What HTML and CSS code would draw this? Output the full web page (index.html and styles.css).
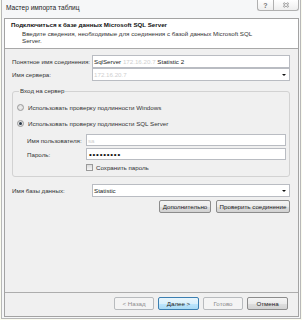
FILE: index.html
```html
<!DOCTYPE html>
<html lang="ru">
<head>
<meta charset="utf-8">
<title>Мастер импорта таблиц</title>
<link rel="stylesheet" href="styles.css">
</head>
<body>
<div class="window">
  <div class="titlebar">
    <span class="title">Мастер импорта таблиц</span>
    <div class="caption-btns">
      <span class="cbtn help">?</span>
      <span class="cbtn close">
        <svg width="8" height="6" viewBox="0 0 8 6"><path d="M1.5 1L6.5 5M6.5 1L1.5 5" stroke="#8a8a8a" stroke-width="2.2" fill="none"/><path d="M1.5 1L6.5 5M6.5 1L1.5 5" stroke="#ffffff" stroke-width="0.9" fill="none"/></svg>
      </span>
    </div>
  </div>
  <div class="client">
    <div class="header">
      <div class="h-title">Подключиться к базе данных Microsoft SQL Server</div>
      <div class="h-desc">Введите сведения, необходимые для соединения с базой данных Microsoft SQL<br>Server.</div>
    </div>
    <div class="body">
      <div class="row r1">
        <span class="label">Понятное имя соединения:</span>
        <div class="input"><span>SqlServer&nbsp;</span><span class="masked">172.16.20.7</span><span>&nbsp;Statistic 2</span></div>
      </div>
      <div class="row r2">
        <span class="label">Имя сервера:</span>
        <div class="input combo"><span class="masked">172.16.20.7</span><span class="arrow"></span></div>
      </div>
      <fieldset class="group">
        <legend>Вход на сервер</legend>
        <div class="opt"><span class="radio"></span>Использовать проверку подлинности Windows</div>
        <div class="opt opt2"><span class="radio checked"></span>Использовать проверку подлинности SQL Server</div>
        <div class="subrow first"><span class="label">Имя пользователя:</span><div class="input"><span class="masked">sa</span></div></div>
        <div class="subrow"><span class="label">Пароль:</span><div class="input pwd">•••••••••</div></div>
        <div class="check-row"><span class="check"></span>Сохранить пароль</div>
      </fieldset>
      <div class="row r3">
        <span class="label">Имя базы данных:</span>
        <div class="input combo"><span>Statistic</span><span class="arrow"></span></div>
      </div>
      <div class="btn-row">
        <div class="btn w52">Дополнительно</div>
        <div class="btn w74">Проверить соединение</div>
      </div>
    </div>
    <div class="footer">
      <div class="btn disabled w40">&lt; Назад</div>
      <div class="btn primary w41">Далее &gt;</div>
      <div class="btn disabled w40">Готово</div>
      <div class="btn w41">Отмена</div>
    </div>
  </div>
</div>
</body>
</html>
```
FILE: styles.css
```css
* { box-sizing: border-box; }
html, body { margin: 0; padding: 0; }
body {
  width: 302px;
  height: 320px;
  overflow: hidden;
  background: #fafbef;
  font-family: "Liberation Sans", Arial, sans-serif;
  font-size: 6.2px;
  color: #222;
}
.window {
  margin-left: 1px;
  width: 300px;
  height: 319px;
  border: 1px solid #b8b8b8;
  border-top: none;
  background: #f6f7f8;
  padding: 0 1px 1px 2px;
  display: flex;
  flex-direction: column;
}
.titlebar {
  height: 18px;
  display: flex;
  justify-content: space-between;
  align-items: flex-start;
}
.title {
  padding-left: 2px;
  line-height: 15px;
  font-size: 6.6px;
  color: #1e1e1e;
}
.caption-btns { display: flex; }
.cbtn {
  height: 11px;
  border: 1px solid #b0b0b0;
  border-top: none;
  background: linear-gradient(#ffffff, #eeeeee);
  display: flex;
  align-items: center;
  justify-content: center;
  color: #777;
}
.help { width: 16px; border-radius: 0 0 0 3px; font-size: 7px; font-weight: bold; border-right: none; }
.close { width: 26px; border-radius: 0 0 3px 0; }
.client {
  flex: 1;
  border: 1px solid #a3a3a3;
  display: flex;
  flex-direction: column;
}
.header {
  height: 30px;
  background: #ffffff;
  border-bottom: 1px solid #a8a8a8;
  padding: 2px 0 0 6px;
}
.h-title {
  font-weight: bold;
  line-height: 8px;
  color: #111;
}
.h-desc {
  margin: 1px 0 0 11px;
  line-height: 7px;
  color: #333;
}
.body {
  flex: 1;
  background: #f0f0f0;
  padding: 6px 8px 0 7px;
  display: flex;
  flex-direction: column;
}
.row {
  display: grid;
  grid-template-columns: 80px 1fr;
  align-items: center;
  height: 13px;
}
.label { color: #333; white-space: nowrap; }
.input {
  height: 13px;
  border: 1px solid #b9bcc2;
  background: #fff;
  padding-left: 1px;
  display: flex;
  align-items: center;
  white-space: nowrap;
  color: #222;
}
.masked { color: #cfcfcf; }
.combo { justify-content: space-between; padding-right: 3px; }
.arrow {
  width: 0; height: 0;
  border-left: 2px solid transparent;
  border-right: 2px solid transparent;
  border-top: 2px solid #111;
}
.group {
  margin: 6px 0 0 0;
  padding: 8px 3px 5px 4px;
  border: 1px solid #d2d2d2;
  border-radius: 3px;
  min-width: 0;
}
.group legend {
  padding: 0 1px;
  margin-left: 2px;
  line-height: 8px;
  color: #333;
}
.opt {
  height: 8px;
  display: flex;
  align-items: center;
  color: #333;
  white-space: nowrap;
}
.opt2 { margin-top: 8px; }
.radio {
  width: 7px; height: 7px;
  border-radius: 50%;
  border: 1px solid #9a9a9a;
  background: radial-gradient(circle, #eeeeee, #d8d8d8);
  margin-right: 4px;
  display: flex;
  align-items: center;
  justify-content: center;
}
.radio.checked::after {
  content: "";
  width: 3px; height: 3px;
  border-radius: 50%;
  background: #2a3a4a;
}
.subrow {
  display: grid;
  grid-template-columns: 59px 1fr;
  align-items: center;
  padding-left: 10px;
  height: 12px;
  margin-top: 2px;
}
.subrow.first { margin-top: 7px; }
.subrow .input { height: 12px; }
.pwd { font-size: 8px; letter-spacing: 0.75px; color: #111; padding-left: 2px; }
.check-row {
  margin-top: 3px;
  height: 8px;
  padding-left: 69px;
  display: flex;
  align-items: center;
  color: #333;
}
.check {
  width: 7px; height: 7px;
  border: 1px solid #9a9a9a;
  background: linear-gradient(#dcdcdc, #f4f4f4);
  margin-right: 3px;
}
.r3 { margin-top: 7px; }
.btn-row {
  margin-top: 3px;
  display: flex;
  justify-content: flex-end;
  gap: 5px;
}
.btn {
  height: 13px;
  border: 1px solid #8c8c8c;
  border-radius: 2px;
  background: linear-gradient(#f4f4f4 0%, #ebebeb 50%, #dedede 51%, #d2d2d2 100%);
  display: flex;
  align-items: center;
  justify-content: center;
  color: #222;
  white-space: nowrap;
}
.btn.primary {
  border-color: #3c7fb1;
  background: linear-gradient(#e8f5fc 0%, #d9f0fc 50%, #bee6fd 51%, #a9daf5 100%);
}
.btn.disabled {
  border-color: #b8bbbe;
  background: #f4f4f4;
  color: #8c8c8c;
}
.w40 { width: 40px; }
.w41 { width: 41px; }
.w52 { width: 52px; }
.w74 { width: 74px; }
.footer {
  height: 24px;
  border-top: 1px solid #adadad;
  background: #f0f0f0;
  padding: 4px 10px 0 0;
  display: flex;
  justify-content: flex-end;
  align-items: flex-start;
  gap: 4px;
}
```
